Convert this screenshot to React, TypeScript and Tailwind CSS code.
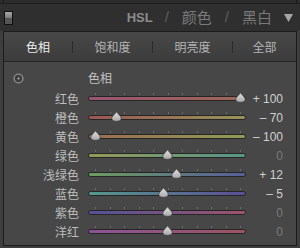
const cjk = "font-['Noto_Sans_CJK_SC','Noto_Sans',sans-serif]"

type Row = { name: string; value: number; track: string }

// 色相 sliders, -100..100
const rows: Row[] = [
  { name: '红色', value: 100, track: 'bg-[linear-gradient(to_right,#9a5472,#9e6656)]' },
  { name: '橙色', value: -70, track: 'bg-[linear-gradient(to_right,#9c5654,#969458)]' },
  { name: '黄色', value: -100, track: 'bg-[linear-gradient(to_right,#9c6c52,#8f9c56)]' },
  { name: '绿色', value: 0, track: 'bg-[linear-gradient(to_right,#939a56,#56968a)]' },
  { name: '浅绿色', value: 12, track: 'bg-[linear-gradient(to_right,#6c9c60,#555e9a)]' },
  { name: '蓝色', value: -5, track: 'bg-[linear-gradient(to_right,#56988c,#5a4e96)]' },
  { name: '紫色', value: 0, track: 'bg-[linear-gradient(to_right,#525296,#9c546c)]' },
  { name: '洋红', value: 0, track: 'bg-[linear-gradient(to_right,#8a5498,#9c5460)]' },
]

const ticks = [-100, -80, -60, -40, -20, 0, 20, 40, 60, 80, 100]
const posOf = (v: number) => 7 + ((v + 100) / 200) * 145

function formatValue(v: number) {
  if (v > 0) return `+ ${v}`
  if (v < 0) return `– ${-v}`
  return '0'
}

function Thumb() {
  return (
    <svg width="11" height="11" viewBox="0 0 11 11">
      <defs>
        <linearGradient id="th" x1="0" y1="0" x2="0" y2="1">
          <stop offset="0" stopColor="#e4e4e4" />
          <stop offset="1" stopColor="#a6a6a6" />
        </linearGradient>
      </defs>
      <path
        d="M5.5 0.6 C6.6 3 10.3 5 10.3 7.4 C10.3 9.3 8.2 10.4 5.5 10.4 C2.8 10.4 0.7 9.3 0.7 7.4 C0.7 5 4.4 3 5.5 0.6Z"
        fill="url(#th)"
        stroke="#3a3a3a"
        strokeWidth="0.8"
      />
    </svg>
  )
}

function SliderRow({ row }: { row: Row }) {
  const x = posOf(row.value)
  return (
    <div className="flex items-center h-[19px]">
      <div className={`w-[75px] text-right text-[12px] leading-none text-[#bdbdbd] ${cjk}`}>{row.name}</div>
      <div className="relative w-[158px] h-[19px] ml-[9px]">
        {ticks.map((t) => (
          <div
            key={t}
            className="absolute top-[4px] w-px h-[2px] bg-[#6c6c6c]"
            style={{ left: posOf(t) }}
          />
        ))}
        <div className={`mt-[7px] h-[5px] rounded-full border border-[#262626] ${row.track}`} />
        <div className="absolute top-[3px]" style={{ left: x - 5.5 }}>
          <Thumb />
        </div>
      </div>
      <div
        className={`flex-1 pr-[13px] text-right text-[12px] leading-none font-['Liberation_Sans',sans-serif] ${
          row.value === 0 ? 'text-[#7a7a7a]' : 'text-[#d0d0d0]'
        }`}
      >
        {formatValue(row.value)}
      </div>
    </div>
  )
}

export default function App() {
  const tabs = [
    { label: '色相', w: 'w-[68px]', active: true },
    { label: '饱和度', w: 'w-[80px]', active: false },
    { label: '明亮度', w: 'w-[80px]', active: false },
    { label: '全部', w: 'flex-1', active: false },
  ]

  return (
    <div className="w-[300px] h-[248px] bg-[#3e3e3e] overflow-hidden">
      {/* stub of panel above */}
      <div className="h-[3px] bg-[#2c2c2c]">
        <div className="mx-[3px] h-full border-x border-[#1a1a1a]" />
      </div>

      {/* header */}
      <div className="h-[28px] bg-[#2f2f2f] border-t border-[#1e1e1e] flex items-center">
        <div className="ml-[4px] w-[9px] h-[14px] border border-[#111] flex flex-col">
          <div className="h-1/2 bg-[linear-gradient(to_bottom,#a8a8a8,#7a7a7a)]" />
          <div className="h-1/2 bg-[#555]" />
        </div>
        <div className="ml-auto mr-[7px] flex items-center">
          <span className="text-[13px] font-bold text-[#8c8c8c] font-['Liberation_Sans',sans-serif]">HSL</span>
          <span className="ml-[12px] text-[15px] text-[#5e5e5e] font-['Liberation_Sans',sans-serif]">/</span>
          <span className={`ml-[13px] text-[15px] text-[#7a7a7a] ${cjk}`}>颜色</span>
          <span className="ml-[13px] text-[15px] text-[#5e5e5e] font-['Liberation_Sans',sans-serif]">/</span>
          <span className={`ml-[13px] text-[15px] text-[#7a7a7a] ${cjk}`}>黑白</span>
          <svg className="ml-[12px]" width="9" height="8" viewBox="0 0 9 8">
            <path d="M0 0 H9 L4.5 8Z" fill="#a6a6a6" />
          </svg>
        </div>
      </div>

      {/* panel */}
      <div className="mx-[3px] border-x border-t border-b border-[#1c1c1c]">
        <div className="h-[30px] flex items-center bg-[linear-gradient(to_bottom,#484848,#3c3c3c)] border-b border-[#242424]">
          {tabs.map((t, i) => (
            <div key={t.label} className={`${t.w} h-full flex items-center relative`}>
              {i > 0 && <div className="w-px h-[12px] bg-[#2a2a2a]" />}
              <div
                className={`flex-1 text-center text-[12px] ${cjk} ${
                  t.active ? 'text-[#ececec]' : 'text-[#b4b4b4]'
                }`}
              >
                {t.label}
              </div>
            </div>
          ))}
        </div>

        <div className="bg-[#474747] pt-[8px] pb-[4px]">
          <div className="flex items-center h-[16px] mb-[3px]">
            <svg className="ml-[9px]" width="11" height="11" viewBox="0 0 11 11">
              <circle cx="5.5" cy="5.5" r="4.4" fill="#3c3c3c" stroke="#8e8e8e" strokeWidth="1.4" />
              <circle cx="5.5" cy="5.5" r="1.1" fill="#b0b0b0" />
            </svg>
            <span className={`ml-[64px] text-[12px] text-[#c2c2c2] ${cjk}`}>色相</span>
          </div>
          {rows.map((r) => (
            <SliderRow key={r.name} row={r} />
          ))}
        </div>
      </div>
    </div>
  )
}
